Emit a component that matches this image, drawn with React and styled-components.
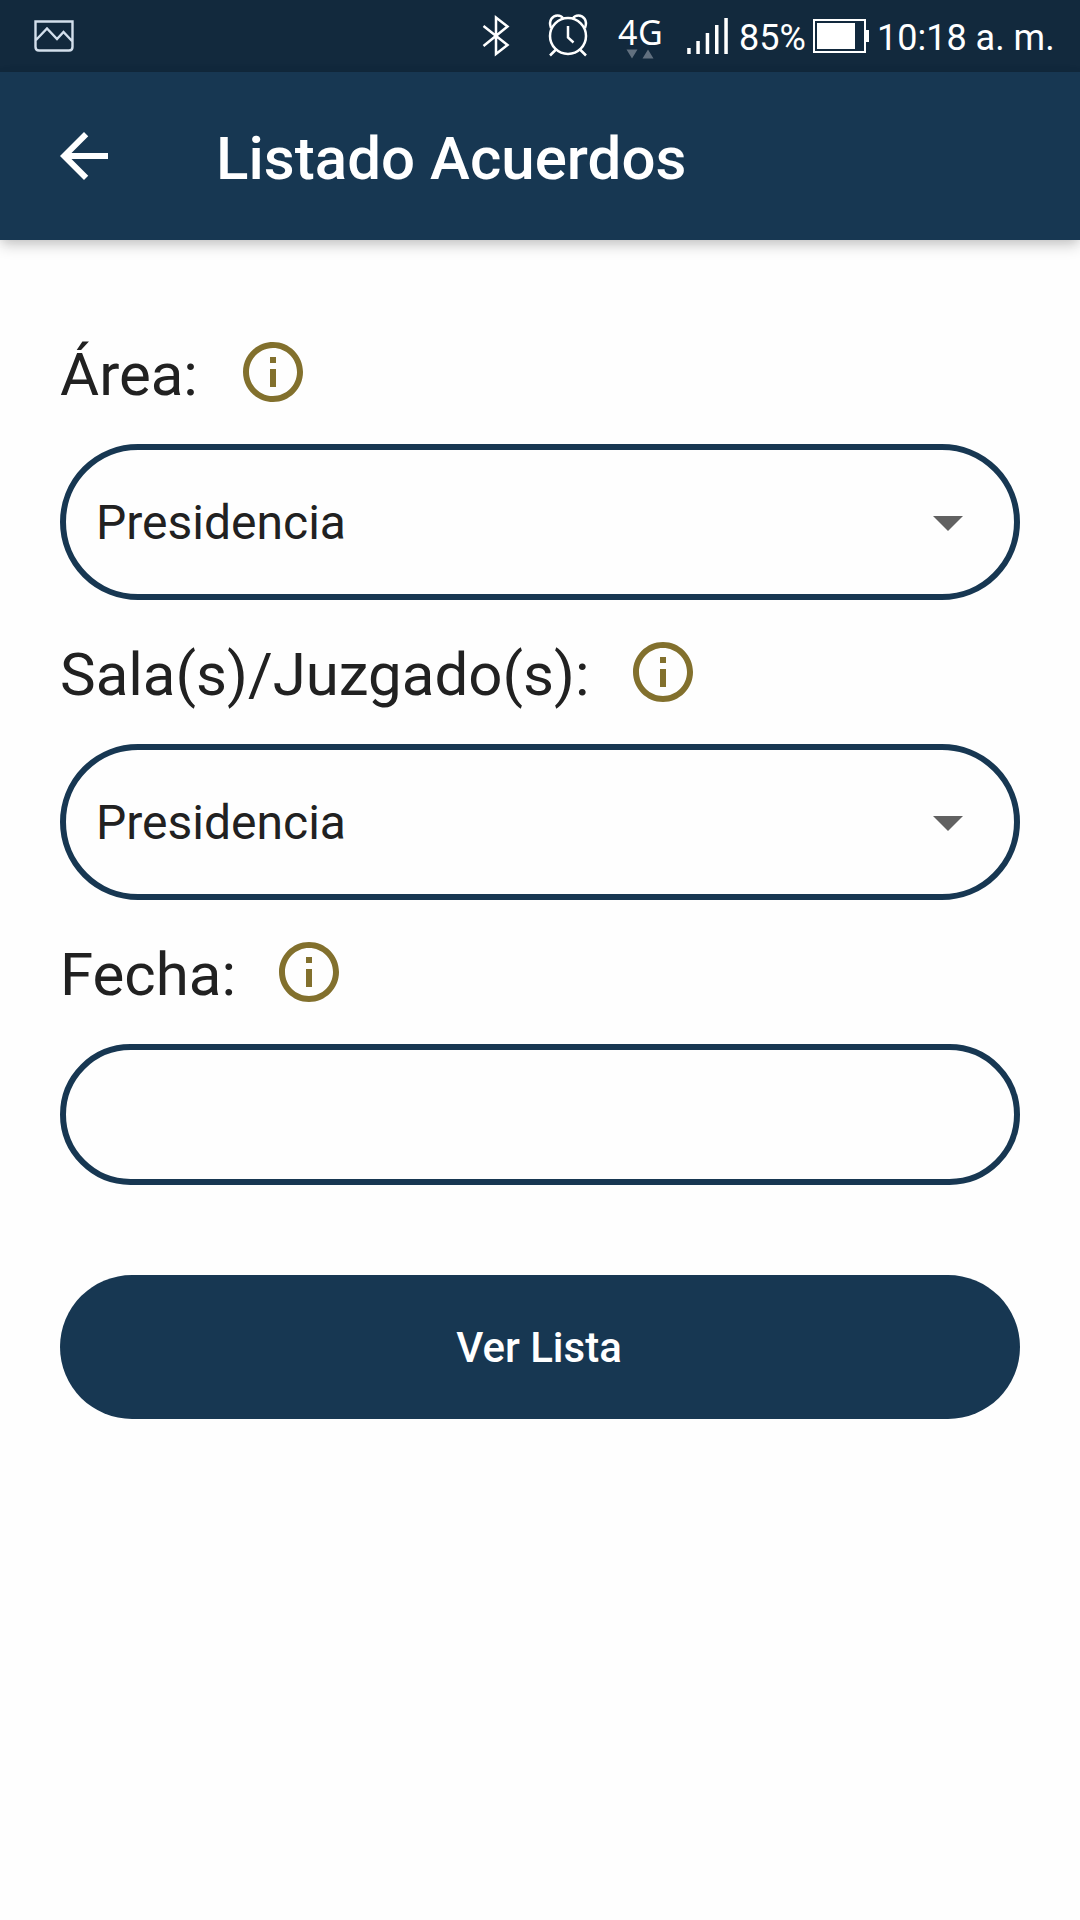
import React from "react";
import styled, { createGlobalStyle } from 'styled-components';


const GlobalStyle = createGlobalStyle`
  body {
    margin: 0;
    background: #fefefe;
    font-family: Roboto, "Liberation Sans", sans-serif;
    color: #212121;
  }
`

const Screen = styled.div`
  width: 1080px;
  height: 1920px;
  overflow: hidden;
  background: #fefefe;
`

const StatusBar = styled.div`
  display: flex;
  align-items: flex-start;
  height: 72px;
  box-sizing: border-box;
  padding-left: 30px;
  background: #12293d;
  color: #fff;
`

const StatusIcon = styled.svg`
  display: block;
  flex: none;
  width: ${p => p.$w}px;
  height: 72px;
  margin-left: ${p => p.$gap || 0}px;
`

const StatusText = styled.span`
  flex: none;
  width: ${p => p.$w}px;
  margin-left: ${p => p.$gap || 0}px;
  font-size: 36px;
  line-height: 76px;
  white-space: nowrap;
`

const Network = styled.div`
  display: flex;
  flex-direction: column;
  flex: none;
  width: 48px;
  height: 72px;
  margin-left: 26px;
`

const NetworkName = styled.span`
  padding-top: 12px;
  font-family: "Noto Sans", sans-serif;
  font-size: 34px;
  line-height: 40px;
  letter-spacing: 0.5px;
  margin-bottom: -3px;
  white-space: nowrap;
`

const AppBar = styled.header`
  position: relative;
  display: flex;
  align-items: center;
  height: 168px;
  box-sizing: border-box;
  padding-left: 48px;
  background: #173752;
  color: #fff;
  box-shadow: 0 6px 14px -1px rgba(0, 0, 0, 0.2), 0 2px 10px -1px rgba(0, 0, 0, 0.08);
`

const Title = styled.h1`
  margin: 0;
  padding: 6px 0 0 96px;
  font-size: 60px;
  font-weight: 500;
  line-height: 72px;
  letter-spacing: 0.05px;
`

const Icon = styled.svg`
  display: block;
  flex: none;
  width: 72px;
  height: 72px;
  fill: ${p => p.color || '#fff'};
`

const Form = styled.main`
  display: flex;
  flex-direction: column;
  padding: 96px 60px 0;
`

const LabelRow = styled.div`
  display: flex;
  align-items: center;
  height: 72px;
  margin-bottom: 36px;
`

const Label = styled.label`
  width: ${p => p.$w}px;
  padding-top: 5px;
  font-size: 60px;
  line-height: 72px;
  white-space: nowrap;
`

const Field = styled.div`
  display: flex;
  align-items: center;
  justify-content: space-between;
  height: ${p => p.$h || 156}px;
  box-sizing: border-box;
  margin-bottom: ${p => p.$after || 36}px;
  padding: 0 30px;
  border: 6px solid #173752;
  border-radius: 78px;
  font-size: 48px;
`

const Button = styled.button`
  height: 144px;
  padding: 0 2px 0 0;
  border: 0;
  border-radius: 72px;
  background: #173752;
  color: #fff;
  font-family: inherit;
  font-size: 42px;
  font-weight: 500;
`

const InfoIcon = () => (
  <Icon viewBox="0 0 24 24" color="#82702d">
    <path d="M11 7h2v2h-2zm0 4h2v6h-2zm1-9C6.48 2 2 6.48 2 12s4.48 10 10 10 10-4.48 10-10S17.52 2 12 2zm0 18c-4.41 0-8-3.59-8-8s3.59-8 8-8 8 3.59 8 8-3.59 8-8 8z" />
  </Icon>
)

const CaretIcon = () => (
  <Icon viewBox="0 0 24 24" color="#616161">
    <path d="M7 10l5 5 5-5z" />
  </Icon>
)

const fields = [
  { label: 'Área:', labelWidth: 177, value: 'Presidencia' },
  { label: 'Sala(s)/Juzgado(s):', labelWidth: 567, value: 'Presidencia' },
]

const Status = () => (
  <StatusBar>
    <StatusIcon $w={48} viewBox="30 0 48 72" fill="none" stroke="#d3dfec" strokeWidth="2.4">
      <path d="M35.5 21.5H72.5V47Q72.5 50.5 69 50.5H39Q35.5 50.5 35.5 47ZM36 40L47 28.5L57 39L63.5 32L72 41" />
    </StatusIcon>
    {/* bluetooth */}
    <StatusIcon $w={36} $gap={400} viewBox="478 0 36 72" fill="none" stroke="#fff" strokeWidth="2.5">
      <path d="M483.5 26L507.5 45L496 54V17.5L507.5 26.5L483.5 46" />
    </StatusIcon>
    {/* alarm */}
    <StatusIcon $w={48} $gap={30} viewBox="544 0 48 72" fill="none" stroke="#fff" strokeWidth="2.5">
      <circle cx="568" cy="36" r="18" />
      <path d="M568 26V37.5L573.5 42.5M556 49.5L550 55.5M580 49.5L586 55.5M551 28C548 20 553 15.5 557.5 15.5C560 15.5 562 16.5 563 18.5M585 28C588 20 583 15.5 578.5 15.5C576 15.5 574 16.5 573 18.5" />
    </StatusIcon>
    <Network>
      <NetworkName>4G</NetworkName>
      <svg width="48" height="12" viewBox="0 0 48 12" fill="#61707f">
        <path d="M8.5 0.5h11l-5.5 9zM24.5 9.5h11l-5.5-9z" />
      </svg>
    </Network>
    <StatusIcon $w={44} $gap={20} viewBox="686 0 44 72" fill="#fff">
      <path d="M687.2 48h3.5v6h-3.5zM696.3 41h3.5v13h-3.5zM705.7 33h3.5v21h-3.5zM715 25h3.5v29h-3.5zM724.300 18h3.500v36h-3.500z" />
    </StatusIcon>
    <StatusText $w={66} $gap={9}>85%</StatusText>
    <StatusIcon $w={58} $gap={7} viewBox="812 0 58 72" fill="#fff">
      <path fillRule="evenodd" d="M813 19h53v34h-53zM815 21v30h49v-30zM817 23h38v26h-38zM866 30h3v12h-3z" />
    </StatusIcon>
    <StatusText $w={180} $gap={7}>10:18 a. m.</StatusText>
  </StatusBar>
)

export default function App() {
  return (
    <Screen>
      <GlobalStyle />
      <Status />
      <AppBar>
        <Icon viewBox="0 0 24 24">
          <path d="M20 11H7.83l5.59-5.59L12 4l-8 8 8 8 1.41-1.41L7.83 13H20v-2z" />
        </Icon>
        <Title>Listado Acuerdos</Title>
      </AppBar>
      <Form>
        {fields.map(v => (
          <React.Fragment key={v.label}>
            <LabelRow>
              <Label $w={v.labelWidth}>{v.label}</Label>
              <InfoIcon />
            </LabelRow>
            <Field>
              <span>{v.value}</span>
              <CaretIcon />
            </Field>
          </React.Fragment>
        ))}
        <LabelRow>
          <Label $w={213}>Fecha:</Label>
          <InfoIcon />
        </LabelRow>
        <Field $h={141} $after={90} />
        <Button>Ver Lista</Button>
      </Form>
    </Screen>
  )
}
